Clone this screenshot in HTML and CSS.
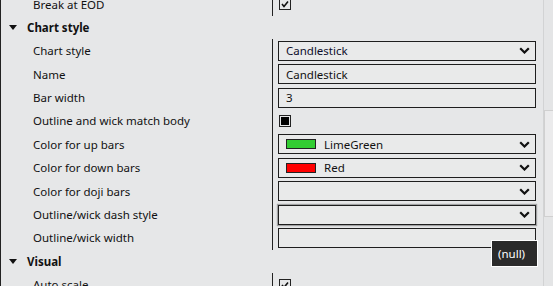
FILE: index.html
```html
<!DOCTYPE html>
<html lang="en">

<head>
    <meta charset="UTF-8">
    <meta name="viewport" content="width=device-width, initial-scale=1.0">
    <title>Properties</title>
    <link rel="stylesheet" href="styles.css">
</head>

<body>
<div class="panel">
    <div class="grid">
        <div class="row">
            <div class="label">Break at EOD</div>
            <div class="value"><span class="check"><svg width="10" height="10" viewBox="0 0 10 10"><polyline points="2,5 4,7.5 8,2.5" fill="none" stroke="#111" stroke-width="1.6"/></svg></span></div>
        </div>
        <div class="row head">
            <div class="label"><svg class="tri" width="8" height="5" viewBox="0 0 8 5"><polygon points="0,0 8,0 4,5" fill="#111"/></svg>Chart style</div>
        </div>
        <div class="row">
            <div class="label">Chart style</div>
            <div class="value"><div class="box"><span class="txt dark">Candlestick</span><svg class="chev" width="11" height="7" viewBox="0 0 11 7"><polyline points="1.2,1.2 5.5,5.5 9.8,1.2" fill="none" stroke="#111" stroke-width="2.2"/></svg></div></div>
        </div>
        <div class="row">
            <div class="label">Name</div>
            <div class="value"><div class="box"><span class="txt">Candlestick</span></div></div>
        </div>
        <div class="row">
            <div class="label">Bar width</div>
            <div class="value"><div class="box"><span class="txt">3</span></div></div>
        </div>
        <div class="row">
            <div class="label">Outline and wick match body</div>
            <div class="value"><span class="check"><span class="fill"></span></span></div>
        </div>
        <div class="row">
            <div class="label">Color for up bars</div>
            <div class="value"><div class="box"><span class="swatch lime"></span><span class="txt">LimeGreen</span><svg class="chev" width="11" height="7" viewBox="0 0 11 7"><polyline points="1.2,1.2 5.5,5.5 9.8,1.2" fill="none" stroke="#111" stroke-width="2.2"/></svg></div></div>
        </div>
        <div class="row">
            <div class="label">Color for down bars</div>
            <div class="value"><div class="box"><span class="swatch red"></span><span class="txt">Red</span><svg class="chev" width="11" height="7" viewBox="0 0 11 7"><polyline points="1.2,1.2 5.5,5.5 9.8,1.2" fill="none" stroke="#111" stroke-width="2.2"/></svg></div></div>
        </div>
        <div class="row">
            <div class="label">Color for doji bars</div>
            <div class="value"><div class="box"><span class="txt"></span><svg class="chev" width="11" height="7" viewBox="0 0 11 7"><polyline points="1.2,1.2 5.5,5.5 9.8,1.2" fill="none" stroke="#111" stroke-width="2.2"/></svg></div></div>
        </div>
        <div class="row">
            <div class="label">Outline/wick dash style</div>
            <div class="value"><div class="box hover"><span class="txt"></span><svg class="chev" width="11" height="7" viewBox="0 0 11 7"><polyline points="1.2,1.2 5.5,5.5 9.8,1.2" fill="none" stroke="#111" stroke-width="2.2"/></svg></div></div>
        </div>
        <div class="row">
            <div class="label">Outline/wick width</div>
            <div class="value tipwrap"><div class="box"><span class="txt"></span></div><div class="tip">(null)</div></div>
        </div>
        <div class="row head">
            <div class="label"><svg class="tri" width="8" height="5" viewBox="0 0 8 5"><polygon points="0,0 8,0 4,5" fill="#111"/></svg>Visual</div>
        </div>
        <div class="row">
            <div class="label">Auto scale</div>
            <div class="value"><span class="check"><svg width="10" height="10" viewBox="0 0 10 10"><polyline points="2,5 4,7.5 8,2.5" fill="none" stroke="#111" stroke-width="1.6"/></svg></span></div>
        </div>
    </div>
    <div class="scroll"><div class="thumb"></div></div>
</div>
</body>

</html>
```

FILE: styles.css
```css
body {
    margin: 0;
    background: #e6e7e8;
    font-family: "Noto Sans", "Open Sans", sans-serif;
    font-size: 11.5px;
    color: #111;
    overflow: hidden;
}

.panel {
    display: flex;
    height: 286px;
    border-left: 1px solid #222;
}

.grid {
    flex: 1;
    margin-top: -7.7px;
}

.row {
    display: grid;
    grid-template-columns: 271px 1fr;
    height: 23.4px;
}

.label {
    display: flex;
    align-items: center;
    padding-left: 32px;
    white-space: nowrap;
}

.head .label {
    padding-left: 8px;
    font-weight: bold;
}

.tri {
    margin-right: 10px;
}

.value {
    display: flex;
    align-items: center;
    border-left: 1px solid #222;
    padding-left: 5px;
}

.box {
    display: flex;
    align-items: center;
    box-sizing: border-box;
    width: 258px;
    height: 20px;
    border: 1px solid #1e1e1e;
    background: #e9eaea;
    padding: 0 4px 0 7px;
}

.box.hover {
    box-shadow: 0 0 1px 1px rgba(0, 0, 0, 0.3);
}

.txt {
    flex: 1;
}

.dark {
    color: #0d0d2a;
}

.chev {
    margin-right: 1px;
}

.swatch {
    width: 30px;
    height: 10px;
    box-sizing: border-box;
    border: 1px solid #222;
    margin-right: 8px;
}

.lime {
    background: #32cd32;
}

.red {
    background: #ff0000;
}

.check {
    display: flex;
    align-items: center;
    justify-content: center;
    width: 12px;
    height: 12px;
    box-sizing: border-box;
    border: 1px solid #222;
    margin-left: 1px;
}

.fill {
    width: 8px;
    height: 8px;
    background: #000;
}

.tipwrap {
    position: relative;
}

.tip {
    position: absolute;
    left: 218px;
    top: 14px;
    width: 47px;
    height: 27px;
    box-sizing: border-box;
    border: 1px solid #fff;
    background: #2b2b2b;
    color: #fff;
    padding: 5px 0 0 6px;
}

.scroll {
    width: 9px;
    border-left: 1px solid #d2d3d4;
    background: #e4e5e6;
}

.thumb {
    margin-top: 110px;
    height: 105px;
    background: #ebebec;
    border: 1px solid #d0d0d0;
    border-right: none;
}
```
